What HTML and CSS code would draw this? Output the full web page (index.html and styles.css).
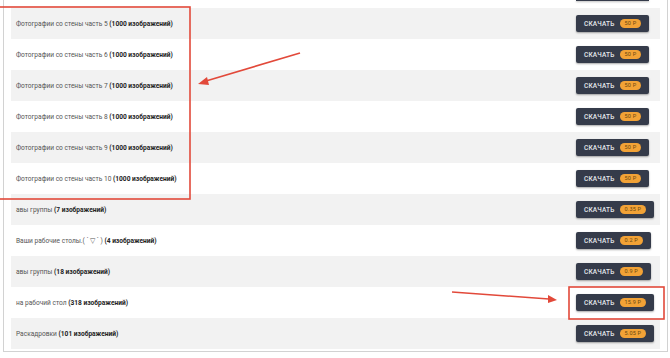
FILE: index.html
```html
<!DOCTYPE html>
<html lang="ru">

<head>
    <meta charset="UTF-8">
    <title>Альбомы</title>
    <link rel="stylesheet" href="styles.css">
</head>

<body>
    <div class="albums">
        <!-- хвост предыдущей строки, видна только кромка кнопки -->
        <div class="row cut">
            <span></span>
            <div class="action">
                <div class="download-edge"></div>
            </div>
        </div>
        <div class="row">
            <span class="name">Фотографии со стены часть 5 <b>(1000 изображений)</b></span>
            <div class="action"><button class="download">СКАЧАТЬ <span class="price">50 Р</span></button></div>
        </div>
        <div class="row">
            <span class="name">Фотографии со стены часть 6 <b>(1000 изображений)</b></span>
            <div class="action"><button class="download">СКАЧАТЬ <span class="price">50 Р</span></button></div>
        </div>
        <div class="row">
            <span class="name">Фотографии со стены часть 7 <b>(1000 изображений)</b></span>
            <div class="action"><button class="download">СКАЧАТЬ <span class="price">50 Р</span></button></div>
        </div>
        <div class="row">
            <span class="name">Фотографии со стены часть 8 <b>(1000 изображений)</b></span>
            <div class="action"><button class="download">СКАЧАТЬ <span class="price">50 Р</span></button></div>
        </div>
        <div class="row">
            <span class="name">Фотографии со стены часть 9 <b>(1000 изображений)</b></span>
            <div class="action"><button class="download">СКАЧАТЬ <span class="price">50 Р</span></button></div>
        </div>
        <div class="row">
            <span class="name">Фотографии со стены часть 10 <b>(1000 изображений)</b></span>
            <div class="action"><button class="download">СКАЧАТЬ <span class="price">50 Р</span></button></div>
        </div>
        <div class="row">
            <span class="name">авы группы <b>(7 изображений)</b></span>
            <div class="action"><button class="download">СКАЧАТЬ <span class="price">0.35 Р</span></button></div>
        </div>
        <div class="row">
            <span class="name">Ваши рабочие столы.( ´ ▽ ` ) <b>(4 изображений)</b></span>
            <div class="action"><button class="download">СКАЧАТЬ <span class="price">0.2 Р</span></button></div>
        </div>
        <div class="row">
            <span class="name">авы группы <b>(18 изображений)</b></span>
            <div class="action"><button class="download">СКАЧАТЬ <span class="price">0.9 Р</span></button></div>
        </div>
        <div class="row">
            <span class="name">на рабочий стол <b>(318 изображений)</b></span>
            <div class="action"><button class="download">СКАЧАТЬ <span class="price">15.9 Р</span></button></div>
        </div>
        <div class="row">
            <span class="name">Раскадровки <b>(101 изображений)</b></span>
            <div class="action"><button class="download">СКАЧАТЬ <span class="price">5.05 Р</span></button></div>
        </div>
    </div>

    <!-- пометки поверх скриншота -->
    <svg class="marks" width="670" height="358" viewBox="0 0 670 358">
        <g fill="none" stroke="#e2493a" stroke-width="1.6">
            <rect x="-2" y="7" width="192" height="192" />
            <rect x="569" y="287" width="95" height="32" />
            <line x1="300" y1="53" x2="206" y2="81" />
            <line x1="452" y1="292" x2="549" y2="299" />
        </g>
        <g fill="#e2493a">
            <polygon points="198,84 207,77 209,85" />
            <polygon points="557,300 548,295 548,303" />
        </g>
    </svg>
</body>

</html>
```

FILE: styles.css
```css
body {
    margin: 0;
    width: 670px;
    height: 358px;
    overflow: hidden;
    position: relative;
    background-color: #fff;
    font-family: Roboto, "Liberation Sans", sans-serif;
}

.albums {
    box-sizing: border-box;
    width: 665px;
    margin: 0 0 0 3px;
    padding: 0 7px 2px 7px;
    border: 1px solid #d2d2d2;
    border-top: none;
}

.row {
    display: grid;
    grid-template-columns: 1fr 84px;
    align-items: center;
    height: 31px;
    padding-left: 5px;
    background-color: #fff;
}

.row:nth-child(even) {
    background-color: #f2f2f2;
}

.row.cut {
    height: 8px;
    align-items: start;
}

.action {
    display: flex;
}

.download-edge {
    width: 73px;
    height: 1px;
    background-color: #353b4a;
    box-shadow: 0 1px 2px rgba(0, 0, 0, 0.35);
}

.name {
    font-size: 6.6px;
    color: #555;
}

.name b {
    color: #222;
}

.download {
    display: flex;
    align-items: center;
    height: 17px;
    padding: 0 8px;
    border: none;
    border-radius: 2px;
    background-color: #353b4a;
    box-shadow: 0 1px 2px rgba(0, 0, 0, 0.35);
    color: #e6e8ec;
    font-family: Roboto, "Liberation Sans", sans-serif;
    font-size: 6.5px;
    font-weight: 500;
    letter-spacing: 0.2px;
    cursor: pointer;
}

.price {
    margin-left: 5px;
    padding: 0 5px;
    height: 9px;
    line-height: 9px;
    border-radius: 5px;
    background-color: #f2a236;
    color: #6b4810;
    font-size: 5.5px;
    font-weight: 400;
}

.marks {
    position: absolute;
    left: 0;
    top: 0;
}
```
